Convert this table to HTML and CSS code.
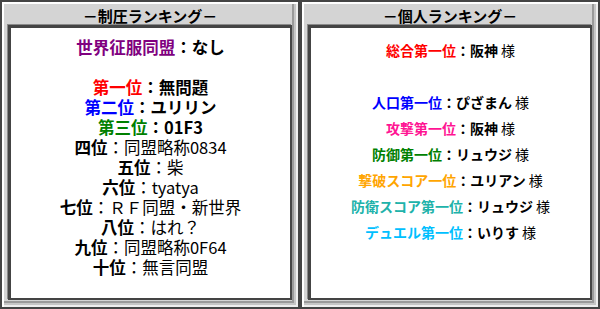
FILE: index.html
```html
<!DOCTYPE html>
<html lang="ja">
<head>
<meta charset="utf-8">
<link rel="stylesheet" href="styles.css">
</head>
<body>
<div class="wrap">
  <section class="panel">
    <h2 class="head">－制圧ランキング－</h2>
    <div class="box box-left">
      <p><b class="c-purple">世界征服同盟</b><b>：なし</b></p>
      <p>&nbsp;</p>
      <p><b class="c-red">第一位</b><b>：無問題</b></p>
      <p><b class="c-blue">第二位</b><b>：ユリリン</b></p>
      <p><b class="c-green">第三位</b><b>：01F3</b></p>
      <p><b>四位</b>：同盟略称0834</p>
      <p><b>五位</b>：柴</p>
      <p><b>六位</b>：tyatya</p>
      <p><b>七位</b>：ＲＦ同盟・新世界</p>
      <p><b>八位</b>：はれ？</p>
      <p><b>九位</b>：同盟略称0F64</p>
      <p><b>十位</b>：無言同盟</p>
    </div>
  </section>
  <section class="panel">
    <h2 class="head">－個人ランキング－</h2>
    <div class="box box-right">
      <p><b class="c-red">総合第一位</b><b>：阪神</b> 様</p>
      <p>&nbsp;</p>
      <p><b class="c-blue">人口第一位</b><b>：ぴざまん</b> 様</p>
      <p><b class="c-pink">攻撃第一位</b><b>：阪神</b> 様</p>
      <p><b class="c-green">防御第一位</b><b>：リュウジ</b> 様</p>
      <p><b class="c-orange">撃破スコア一位</b><b>：ユリアン</b> 様</p>
      <p><b class="c-teal">防衛スコア第一位</b><b>：リュウジ</b> 様</p>
      <p><b class="c-sky">デュエル第一位</b><b>：いりす</b> 様</p>
    </div>
  </section>
</div>
</body>
</html>
```
FILE: styles.css
```css
html, body {
  margin: 0;
  padding: 0;
  background: #ffffff;
}
body {
  font-family: "Noto Sans CJK JP", "Noto Sans", sans-serif;
  color: #000;
}
.wrap {
  display: flex;
  width: 600px;
  height: 309px;
}
.panel {
  flex: 1;
  display: flex;
  flex-direction: column;
  border: 2px solid #444444;
  background: #d4d4d4;
  box-shadow: inset 2px 2px 0 #ffffff,
              inset -2px -2px 0 #eeeeee,
              inset -4px -4px 0 #c6c6c6,
              inset -6px -6px 0 #9a9a9a;
  padding: 0 6px 7px 6px;
}
.head {
  margin: 0;
  height: 23px;
  box-sizing: border-box;
  padding-top: 4px;
  line-height: 19px;
  font-size: 15px;
  font-weight: bold;
  text-align: center;
}
.box {
  flex: 1;
  background: #ffffff;
  border-style: solid;
  border-color: #444444;
  border-width: 3px 2px 2px 3px;
  box-shadow: -1px -1px 0 #8a8a8a;
  text-align: center;
  padding-top: 9px;
}
.box p {
  margin: 0;
  white-space: nowrap;
}
.box-left p {
  font-size: 16.5px;
  line-height: 20px;
}
.box-right p {
  font-size: 14px;
  line-height: 26px;
}
.c-purple { color: #800080; }
.c-red { color: #ff0000; }
.c-blue { color: #0000ff; }
.c-green { color: #008000; }
.c-pink { color: #ff1493; }
.c-orange { color: #ffa500; }
.c-teal { color: #20b2aa; }
.c-sky { color: #00bfff; }
```
